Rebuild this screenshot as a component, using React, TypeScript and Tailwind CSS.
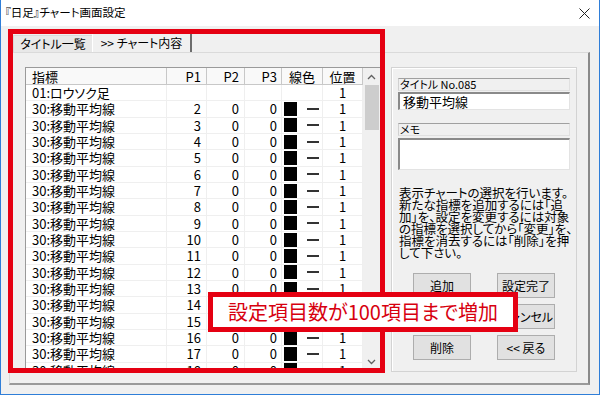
import React from "react";

const Up = () => (
  <svg width="9" height="6" viewBox="0 0 9 6"><polyline points="1,5 4.5,1.5 8,5" fill="none" stroke="#606060" strokeWidth="1.3" /></svg>
);
const Down = () => (
  <svg width="9" height="6" viewBox="0 0 9 6"><polyline points="1,1 4.5,4.5 8,1" fill="none" stroke="#606060" strokeWidth="1.3" /></svg>
);

type Row = { name: string; p1: string; p2: string; p3: string; color: boolean; pos: string };

const rows: Row[] = [
  { name: "01:ロウソク足", p1: "", p2: "", p3: "", color: false, pos: "1" },
  ...Array.from({ length: 18 }, (_, i) => ({
    name: "30:移動平均線",
    p1: String(i + 2),
    p2: "0",
    p3: "0",
    color: true,
    pos: "1",
  })),
];

function Btn({ label }: { label: string }) {
  return (
    <div className="w-[58px] h-[25px] bg-[#e1e1e1] border border-[#adadad] flex items-center justify-center text-[12px] leading-none text-black">
      {label}
    </div>
  );
}

export default function App() {
  return (
    <div className="relative w-[600px] h-[395px] flex flex-col bg-[#f0f0f0] border-x border-b border-[#2f7ed8] overflow-hidden font-['Noto_Sans_CJK_JP',sans-serif] [font-feature-settings:'palt'] text-black">
      {/* title bar */}
      <div className="h-[26px] bg-white flex items-center justify-between pl-[4px] pr-[9px] shrink-0">
        <span className="text-[11.5px] leading-none">『日足』チャート画面設定</span>
        <svg width="11" height="11" viewBox="0 0 11 11">
          <line x1="0.5" y1="0.5" x2="10.5" y2="10.5" stroke="#222" strokeWidth="1" />
          <line x1="10.5" y1="0.5" x2="0.5" y2="10.5" stroke="#222" strokeWidth="1" />
        </svg>
      </div>

      {/* body */}
      <div className="flex-1 flex flex-col pl-[8px] pr-[9px] pt-[6px]">
        {/* tabs */}
        <div className="h-[20px] flex items-end pl-[4px]">
          <div className="w-[79px] h-[17px] bg-[#e8e8e8] border-t border-l border-[#d9d9d9] flex items-center justify-center text-[12px] leading-none">
            タイトル一覧
          </div>
          <div className="w-[100px] h-[20px] bg-[#f0f0f0] border-t border-l border-white border-r-2 border-r-[#6d6d6d] flex items-center justify-center text-[12px] leading-none">
            &gt;&gt; チャート内容
          </div>
        </div>

        {/* tab page */}
        <div className="h-[333px] flex border-t border-l border-[#dadada] border-r-2 border-r-[#8a8a8a] border-b-2 border-b-[#9a9a9a] pl-[15px] pt-[14px]">
          {/* list */}
          <div className="w-[355px] h-[303px] flex border-l border-t border-[#9a9a9a] bg-white overflow-hidden">
            <div className="w-[337px] flex flex-col">
              <div className="h-[17px] flex shrink-0 bg-[#f9f9f9] border-b border-[#c8c8c8] text-[13px] leading-none">
                <div className="w-[141px] border-r border-[#c8c8c8] flex items-center pl-[6px]">指標</div>
                <div className="w-[40px] border-r border-[#c8c8c8] flex items-center justify-end pr-[5px]">P1</div>
                <div className="w-[38px] border-r border-[#c8c8c8] flex items-center justify-end pr-[5px]">P2</div>
                <div className="w-[37px] border-r border-[#c8c8c8] flex items-center justify-end pr-[4px]">P3</div>
                <div className="w-[41px] border-r border-[#c8c8c8] flex items-center justify-center">線色</div>
                <div className="w-[40px] border-r border-[#c8c8c8] flex items-center justify-center">位置</div>
              </div>
              {rows.map((r, i) => (
                <div key={i} className="h-[16.33px] flex shrink-0 border-b border-[#efefef] text-[13px] leading-none">
                  <div className="w-[141px] border-r border-[#efefef] flex items-center pl-[6px] whitespace-nowrap">{r.name}</div>
                  <div className="w-[40px] border-r border-[#efefef] flex items-center justify-end pr-[5px]">{r.p1}</div>
                  <div className="w-[38px] border-r border-[#efefef] flex items-center justify-end pr-[5px]">{r.p2}</div>
                  <div className="w-[37px] border-r border-[#efefef] flex items-center justify-end pr-[4px]">{r.p3}</div>
                  <div className="w-[41px] border-r border-[#efefef] flex items-center pl-[2px]">
                    {r.color && (
                      <>
                        <div className="w-[13px] h-[14px] bg-black" />
                        <div className="w-[12px] h-[2px] bg-[#333] ml-[10px]" />
                      </>
                    )}
                  </div>
                  <div className="w-[40px] border-r border-[#efefef] flex items-center justify-center">{r.pos}</div>
                </div>
              ))}
            </div>
            {/* scrollbar */}
            <div className="w-[17px] bg-[#f0f0f0] flex flex-col">
              <div className="h-[17px] flex items-center justify-center"><Up /></div>
              <div className="h-[45px] w-[14px] ml-[2px] bg-[#cdcdcd]" />
              <div className="flex-1" />
              <div className="h-[17px] flex items-center justify-center"><Down /></div>
            </div>
          </div>

          {/* right group box */}
          <div className="ml-[11px] w-[186px] h-[305px] border border-[#d3d3d3] shadow-[inset_1px_1px_0_#ffffff] px-[6px] pt-[10px] flex flex-col">
            <div className="h-[13px] border-t border-[#a0a0a0] border-l border-l-[#d0d0d0] border-b border-b-[#e0e0e0] border-r border-r-[#e0e0e0] flex items-center pl-[1px] text-[11px] leading-none">
              タイトル No.085
            </div>
            <div className="mt-[1px] h-[18px] bg-white border-t-2 border-l-2 border-t-[#8a8a8a] border-l-[#8a8a8a] border-r border-b border-r-[#e3e3e3] border-b-[#e3e3e3] flex items-center pl-[3px] text-[13px] leading-none">
              移動平均線
            </div>
            <div className="mt-[13px] h-[13px] border-t border-[#a0a0a0] border-l border-l-[#d0d0d0] border-b border-b-[#e0e0e0] border-r border-r-[#e0e0e0] flex items-center pl-[1px] text-[11px] leading-none">
              メモ
            </div>
            <div className="mt-[2px] h-[32px] bg-white border-t-2 border-l-2 border-t-[#8a8a8a] border-l-[#8a8a8a] border-r border-b border-r-[#e3e3e3] border-b-[#e3e3e3]" />
            <div className="mt-[17px] text-[12.5px] leading-[12px] whitespace-nowrap pl-[1px]">
              <div>表示チャートの選択を行います。</div>
              <div>新たな指標を追加するには「追</div>
              <div>加」を、設定を変更するには対象</div>
              <div>の指標を選択してから「変更」を、</div>
              <div>指標を消去するには「削除」を押</div>
              <div>して下さい。</div>
            </div>
            <div className="mt-[14px] flex flex-col gap-[6px] pl-[15px]">
              <div className="flex gap-[26px]"><Btn label="追加" /><Btn label="設定完了" /></div>
              <div className="flex gap-[26px]"><Btn label="変更" /><Btn label="キャンセル" /></div>
              <div className="flex gap-[26px]"><Btn label="削除" /><Btn label="<< 戻る" /></div>
            </div>
          </div>
        </div>
      </div>

      {/* red annotation frame */}
      <div className="absolute left-[7px] top-[29px] w-[377px] h-[344px] border-[5px] border-[#e50012]" />
      {/* callout */}
      <div className="absolute left-[207px] top-[292px] w-[310px] h-[40px] border-[5px] border-[#e50012] bg-white flex items-center justify-center">
        <span className="text-[20px] leading-none text-[#d7000f] whitespace-nowrap">設定項目数が100項目まで増加</span>
      </div>
    </div>
  );
}
